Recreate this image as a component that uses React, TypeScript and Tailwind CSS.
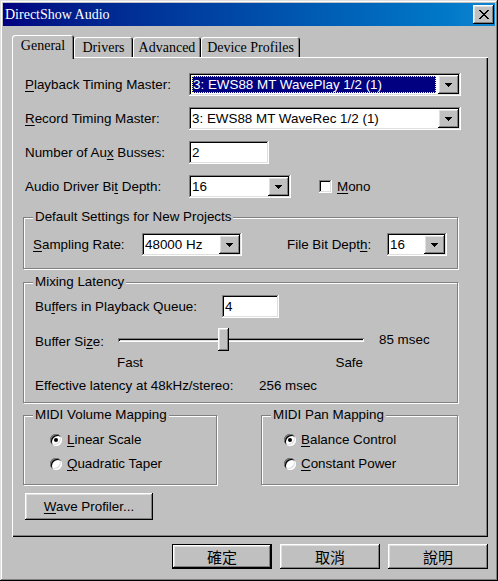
import React from "react";

const raised =
  "shadow-[inset_-1px_-1px_#000,inset_1px_1px_#fff,inset_-2px_-2px_#808080,inset_2px_2px_#dfdfdf]";
const sunken =
  "shadow-[inset_-1px_-1px_#fff,inset_1px_1px_#808080,inset_-2px_-2px_#dfdfdf,inset_2px_2px_#000]";

const Key = ({ children }: { children: React.ReactNode }) => (
  <span className="underline underline-offset-[2px]">{children}</span>
);

const DownArrow = () => (
  <svg width="7" height="4" viewBox="0 0 7 4" shapeRendering="crispEdges">
    <path d="M0 0h7v1H0zM1 1h5v1H1zM2 2h3v1H2zM3 3h1v1H3z" fill="#000" />
  </svg>
);

const closeRows = [
  "XX......XX",
  ".XX....XX.",
  "..XX..XX..",
  "...XXXX...",
  "....XX....",
  "...XXXX...",
  "..XX..XX..",
  ".XX....XX.",
  "XX......XX",
];

const CloseGlyph = () => (
  <svg width="10" height="9" viewBox="0 0 10 9" shapeRendering="crispEdges">
    {closeRows.map((row, y) =>
      row.split("").map((c, x) =>
        c === "X" ? <rect key={`${x}-${y}`} x={x} y={y} width="1" height="1" fill="#000" /> : null
      )
    )}
  </svg>
);

function Combo({
  value,
  className,
  focused,
}: {
  value: string;
  className: string;
  focused?: boolean;
}) {
  return (
    <div className={`flex h-[23px] shrink-0 bg-white p-[2px] ${sunken} ${className}`}>
      <div className="flex min-w-0 flex-1 p-[1px] pr-[2px]">
        {focused ? (
          <div className="flex flex-1 items-center whitespace-nowrap bg-[#000080] pl-[1px] text-white outline-1 outline-dotted outline-[#ffff80] -outline-offset-1">
            {value}
          </div>
        ) : (
          <div className="flex flex-1 items-center whitespace-nowrap">{value}</div>
        )}
      </div>
      <div className={`flex w-[21px] shrink-0 items-center justify-center bg-[#c0c0c0] ${raised}`}>
        <DownArrow />
      </div>
    </div>
  );
}

function TextBox({ value, className }: { value: string; className: string }) {
  return (
    <div className={`flex h-[23px] shrink-0 items-center bg-white pl-[3px] ${sunken} ${className}`}>
      {value}
    </div>
  );
}

function Radio({ checked }: { checked?: boolean }) {
  return (
    <div className="flex h-[12px] w-[12px] shrink-0 items-center justify-center rounded-full bg-white shadow-[inset_1px_1px_#808080,inset_-1px_-1px_#fff,inset_2px_2px_#000,inset_-2px_-2px_#dfdfdf]">
      {checked && <div className="h-[4px] w-[4px] rounded-full bg-black" />}
    </div>
  );
}

function Group({
  title,
  className,
  children,
}: {
  title: string;
  className: string;
  children: React.ReactNode;
}) {
  return (
    <div
      className={`relative border border-[#808080] shadow-[1px_1px_0_#fff,inset_1px_1px_0_#fff] ${className}`}
    >
      <span className="absolute -top-[9px] left-[9px] whitespace-nowrap bg-[#c0c0c0] px-[2px] leading-[16px]">
        {title}
      </span>
      {children}
    </div>
  );
}

function Tab({ label, active, className }: { label: string; active?: boolean; className: string }) {
  if (active) {
    return (
      <div
        className={`relative z-10 -mb-[2px] flex h-[24px] justify-center rounded-t-[3px] bg-[#c0c0c0] pt-[3px] shadow-[inset_1px_1px_#fff,inset_-1px_0_#000,inset_-2px_0_#808080] ${className}`}
      >
        {label}
      </div>
    );
  }
  return (
    <div
      className={`flex h-[20px] justify-center rounded-t-[3px] bg-[#c0c0c0] pt-[3px] shadow-[inset_1px_1px_#fff,inset_-1px_0_#000,inset_-2px_0_#808080] ${className}`}
    >
      {label}
    </div>
  );
}

function WinButton({
  children,
  isDefault,
}: {
  children: React.ReactNode;
  isDefault?: boolean;
}) {
  return (
    <button
      className={`flex h-[25px] w-[100px] items-center justify-center bg-[#c0c0c0] font-['Noto_Sans_CJK_TC',sans-serif] text-[15px] ${
        isDefault
          ? "shadow-[inset_0_0_0_1px_#000,inset_-2px_-2px_#000,inset_2px_2px_#fff,inset_-3px_-3px_#808080,inset_3px_3px_#dfdfdf]"
          : raised
      }`}
    >
      {children}
    </button>
  );
}

export default function App() {
  return (
    <div
      className={`flex h-[581px] w-[498px] flex-col bg-[#c0c0c0] p-[3px] font-['Liberation_Sans',Arial,sans-serif] text-[13.4px] leading-[16px] text-black shadow-[inset_-1px_-1px_#000,inset_1px_1px_#dfdfdf,inset_-2px_-2px_#808080,inset_2px_2px_#fff]`}
    >
      {/* title bar */}
      <div className="flex h-[23px] shrink-0 items-center justify-between bg-linear-to-r from-[#000080] to-[#1084d0] pl-[2px]">
        <span className="font-['Liberation_Serif',serif] text-[14px] text-white">DirectShow Audio</span>
        <div className={`mr-[1px] flex h-[19px] w-[21px] items-center justify-center bg-[#c0c0c0] ${raised}`}>
          <CloseGlyph />
        </div>
      </div>

      {/* tabs */}
      <div className="ml-[9px] mt-[9px] flex h-[22px] items-end font-['Liberation_Serif',serif] text-[14px]">
        <Tab label="General" active className="w-[62px]" />
        <Tab label="Drivers" className="w-[59px]" />
        <Tab label="Advanced" className="w-[68px]" />
        <Tab label="Device Profiles" className="w-[99px]" />
      </div>

      {/* page */}
      <div className="ml-[9px] flex h-[480px] w-[476px] flex-col pl-[11px] pt-[16px] shadow-[inset_1px_1px_#fff,inset_-1px_-1px_#000,inset_-2px_-2px_#808080]">
        <div className="ml-[2px] flex h-[23px] items-center">
          <span className="w-[164px]">
            <Key>P</Key>layback Timing Master:
          </span>
          <Combo value="3: EWS88 MT WavePlay 1/2 (1)" className="w-[272px]" focused />
        </div>
        <div className="ml-[2px] mt-[11px] flex h-[23px] items-center">
          <span className="w-[164px]">
            <Key>R</Key>ecord Timing Master:
          </span>
          <Combo value="3: EWS88 MT WaveRec 1/2 (1)" className="w-[272px]" />
        </div>
        <div className="ml-[2px] mt-[11px] flex h-[23px] items-center">
          <span className="w-[164px]">
            Number of Au<Key>x</Key> Busses:
          </span>
          <TextBox value="2" className="w-[80px]" />
        </div>
        <div className="ml-[2px] mt-[11px] flex h-[23px] items-center">
          <span className="w-[164px]">
            Audio Driver Bi<Key>t</Key> Depth:
          </span>
          <Combo value="16" className="w-[102px]" />
          <div className={`ml-[28px] h-[13px] w-[13px] bg-white ${sunken}`} />
          <span className="ml-[5px]">
            <Key>M</Key>ono
          </span>
        </div>

        <Group title="Default Settings for New Projects" className="mt-[19px] w-[435px] pb-[12px] pl-[9px] pt-[15px]">
          <div className="flex h-[23px] items-center">
            <span className="w-[109px]">
              <Key>S</Key>ampling Rate:
            </span>
            <Combo value="48000 Hz" className="w-[100px]" />
            <span className="ml-[45px] w-[100px]">
              File Bit Dept<Key>h</Key>:
            </span>
            <Combo value="16" className="w-[60px]" />
          </div>
        </Group>

        <Group title="Mixing Latency" className="mt-[13px] w-[435px] pb-[8px] pl-[11px] pt-[12px]">
          <div className="flex h-[23px] items-center">
            <span className="w-[187px]">
              Bu<Key>f</Key>fers in Playback Queue:
            </span>
            <TextBox value="4" className="w-[57px]" />
          </div>
          <div className="mt-[10px] flex h-[23px] items-center">
            <span className="mt-[4px] w-[83px]">
              Buffer Si<Key>z</Key>e:
            </span>
            <div className="relative flex h-[23px] w-[246px] items-center">
              <div className="h-[4px] w-full shadow-[inset_1px_1px_#808080,inset_-1px_-1px_#fff,inset_2px_2px_#000,inset_-2px_-2px_#dfdfdf]" />
              <div className={`absolute left-[100px] top-0 h-[23px] w-[11px] bg-[#c0c0c0] ${raised}`} />
            </div>
            <span className="ml-[15px]">85 msec</span>
          </div>
          <div className="ml-[82px] mt-[4px] flex h-[16px] w-[246px] justify-between">
            <span>Fast</span>
            <span>Safe</span>
          </div>
          <div className="mt-[7px] flex h-[16px]">
            <span className="w-[224px]">Effective latency at 48kHz/stereo:</span>
            <span>256 msec</span>
          </div>
        </Group>

        <div className="mt-[12px] flex w-[435px] justify-between">
          <Group title="MIDI Volume Mapping" className="h-[70px] w-[194px] pl-[26px] pt-[16px]">
            <div className="flex h-[16px] items-center gap-[5px]">
              <Radio checked />
              <span>
                <Key>L</Key>inear Scale
              </span>
            </div>
            <div className="mt-[8px] flex h-[16px] items-center gap-[5px]">
              <Radio />
              <span>
                <Key>Q</Key>uadratic Taper
              </span>
            </div>
          </Group>
          <Group title="MIDI Pan Mapping" className="h-[70px] w-[197px] pl-[22px] pt-[16px]">
            <div className="flex h-[16px] items-center gap-[5px]">
              <Radio checked />
              <span>
                <Key>B</Key>alance Control
              </span>
            </div>
            <div className="mt-[8px] flex h-[16px] items-center gap-[5px]">
              <Radio />
              <span>
                <Key>C</Key>onstant Power
              </span>
            </div>
          </Group>
        </div>

        <button
          className={`ml-[2px] mt-[8px] flex h-[27px] w-[128px] items-center justify-center bg-[#c0c0c0] ${raised}`}
        >
          <span>
            <Key>W</Key>ave Profiler...
          </span>
        </button>
      </div>

      {/* dialog buttons */}
      <div className="ml-[9px] mt-[7px] flex w-[476px] justify-end gap-[8px]">
        <WinButton isDefault>確定</WinButton>
        <WinButton>取消</WinButton>
        <WinButton>說明</WinButton>
      </div>
    </div>
  );
}
